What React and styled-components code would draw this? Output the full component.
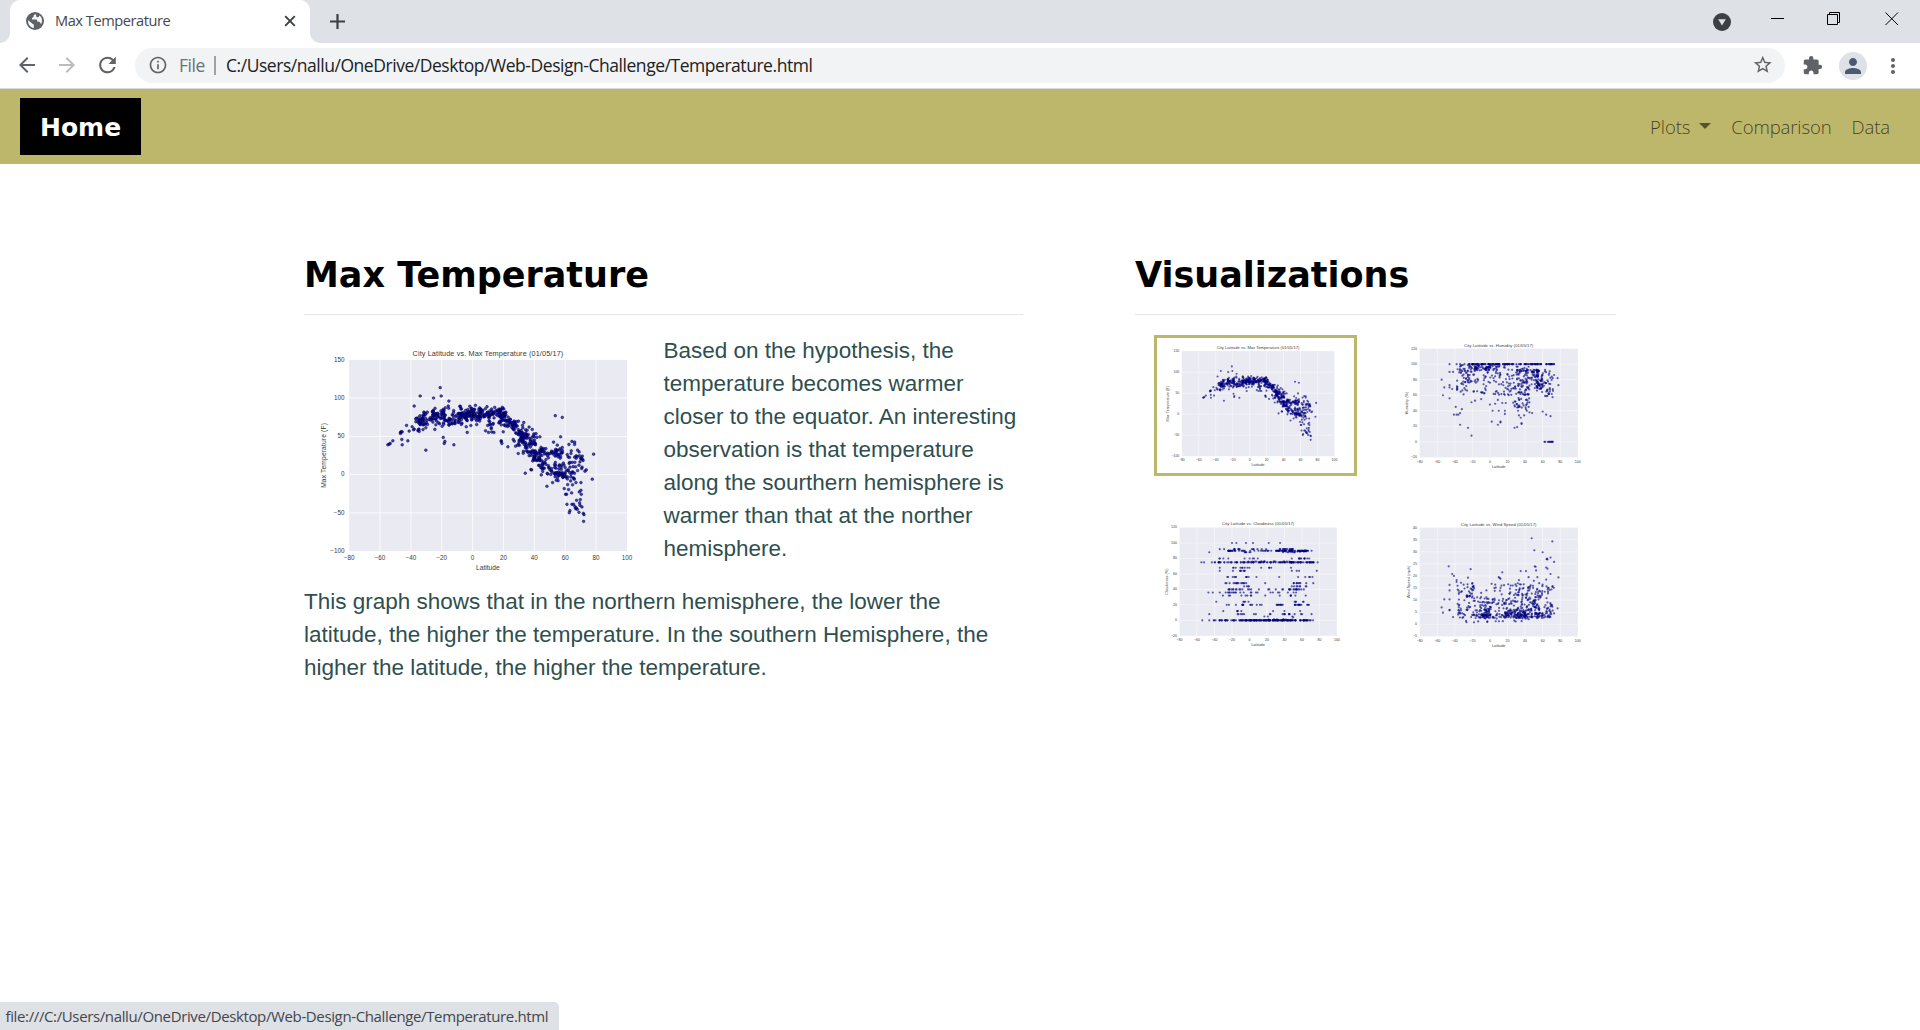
import React from "react";
import styled, { createGlobalStyle } from "styled-components";
import {
  MdArrowBack,
  MdArrowForward,
  MdRefresh,
  MdInfoOutline,
  MdStarBorder,
  MdExtension,
  MdPerson,
  MdMoreVert,
} from "react-icons/md";

const UI = `"Segoe UI", "Open Sans", "Noto Sans", sans-serif`;
const HEAD = `Verdana, "DejaVu Sans", sans-serif`;
const BODY = `Arial, "Liberation Sans", sans-serif`;

const Global = createGlobalStyle`
  *, *::before, *::after { box-sizing: border-box; }
  html, body { margin: 0; padding: 0; }
  body { background: #fff; overflow: hidden; }
  svg { display: block; }
`;

/* ---------- window frame ---------- */

const Window = styled.div`
  display: flex;
  flex-direction: column;
  width: 1920px;
  height: 1030px;
  position: relative;
  font-family: ${UI};
`;

const TabStrip = styled.div`
  display: flex;
  align-items: flex-end;
  height: 43px;
  background: #dee1e6;
`;

const TabFoot = styled.div`
  width: 10px;
  height: 10px;
  background: radial-gradient(
    circle at ${(p) => (p.$side === "left" ? "0 0" : "100% 0")},
    #dee1e6 9.5px,
    #fff 10.2px
  );
`;

const Tab = styled.div`
  display: flex;
  align-items: center;
  width: 300px;
  height: 43px;
  padding: 0 14px 2px 16px;
  border-radius: 10px 10px 0 0;
  background: #fff;
`;

const TabTitle = styled.span`
  flex: 1;
  margin-left: 11px;
  padding-bottom: 2px;
  font-size: 14.6px;
  line-height: 20px;
  letter-spacing: -0.45px;
  color: #45494d;
  white-space: nowrap;
`;

const NewTab = styled.div`
  display: flex;
  align-items: center;
  height: 43px;
  padding: 0 0 1px 10px;
`;

const Captions = styled.div`
  display: flex;
  align-items: flex-start;
  height: 43px;
  margin-left: auto;
  padding: 12px 21.5px 0 0;
`;

const TabSearch = styled.div`
  width: 18px;
  height: 18px;
  margin: 1px 40px 0 0;
`;

const CaptionGlyph = styled.div`
  width: 14px;
  height: 14px;
  margin-left: ${(p) => p.$gap || 0}px;
`;

const Toolbar = styled.div`
  display: flex;
  align-items: center;
  height: 46px;
  padding: 0 15px 0 14px;
  border-bottom: 1px solid #dadce0;
  background: #fff;
  color: #5f6368;
`;

const ToolButton = styled.div`
  display: flex;
  align-items: center;
  justify-content: center;
  width: 25px;
  height: 29px;
  padding-bottom: 1px;
  margin: 0 ${(p) => p.$gap}px 0 ${(p) => p.$before || 0}px;
  color: ${(p) => (p.$muted ? "#babcbe" : "#5f6368")};
`;

const Omnibox = styled.div`
  display: flex;
  align-items: center;
  flex: 1;
  height: 35px;
  padding: 0 12px 1px 13px;
  border-radius: 18px;
  background: #f1f3f4;
`;

const Scheme = styled.span`
  width: 35px;
  margin-left: 11px;
  font-size: 17.5px;
  letter-spacing: -0.45px;
  line-height: 24px;
  color: #6d7175;
`;

const Divider = styled.span`
  width: 2px;
  height: 19px;
  margin-right: 10px;
  background: #9fa3a8;
`;

const Address = styled.span`
  flex: 1;
  font-size: 17.5px;
  line-height: 24px;
  letter-spacing: -0.458px;
  color: #202124;
  white-space: nowrap;
`;

const Avatar = styled.div`
  display: flex;
  align-items: center;
  justify-content: center;
  width: 28px;
  height: 28px;
  margin-right: 14px;
  border-radius: 50%;
  background: #dee1e6;
  color: #4a5a70;
`;

const StatusBubble = styled.div`
  position: absolute;
  left: 0;
  bottom: 0;
  height: 28px;
  width: 559px;
  padding: 3px 0 0 5.5px;
  border-radius: 0 5px 0 0;
  background: #dee1e6;
  font-size: 15px;
  line-height: 22px;
  letter-spacing: -0.37px;
  color: #43474b;
  white-space: nowrap;
`;

/* ---------- page ---------- */

const Navbar = styled.nav`
  display: flex;
  align-items: center;
  justify-content: space-between;
  height: 75px;
  padding: 0 30px 0 20px;
  background: #bdb76b;
`;

const Brand = styled.a`
  display: flex;
  align-items: center;
  height: 57px;
  padding: 2px 20px 0;
  background: #000;
  color: #fff;
  font: bold 25px/37px ${HEAD};
`;

const NavLinks = styled.div`
  display: flex;
  gap: 20px;
`;

const NavLink = styled.a`
  display: flex;
  align-items: center;
  font-size: 18.5px;
  font-weight: 300;
  line-height: 30px;
  letter-spacing: -0.1px;
  color: rgba(0, 0, 0, 0.68);
`;

const Caret = styled.span`
  margin: -1px 0 0 9px;
  border: 6px solid transparent;
  border-top-color: rgba(0, 0, 0, 0.55);
  border-bottom: 0;
`;

const Content = styled.main`
  display: flex;
  gap: 112px;
  padding: 88px 0 0 304px;
`;

const Column = styled.section`
  width: ${(p) => p.$w}px;
`;

const Heading = styled.h1`
  height: 62px;
  margin: 0 0 20px;
  border-bottom: 1px solid #e5e5e5;
  box-sizing: content-box;
  color: #000;
  font: bold 35px/46px ${HEAD};
`;

const Article = styled.div`
  margin-top: -1px;
`;

const Lead = styled.div`
  display: flex;
  align-items: flex-start;
  gap: 1px;
  height: 251px;
`;

const Text = styled.p`
  margin: 0;
  font: 22.5px/33px ${BODY};
  color: #2f4f4f;
  white-space: pre;
`;

const Gallery = styled.div`
  display: grid;
  grid-template-columns: 203px 204px;
  column-gap: 37px;
  row-gap: 38px;
  grid-auto-rows: 141px;
  margin-left: 19px;
`;

const Thumb = styled.div`
  height: 141px;
  border: ${(p) => (p.$active ? "3px solid #bdb76b" : "0")};
`;

/* ---------- plots ---------- */

// Plot drawings use a 1080 x 720 canvas with the axes at 136..972 by 72..648.
const AX = { x: 136, y: 72, w: 837, h: 576 };

function random(seed) {
  let s = seed;
  return () => {
    s = (s * 1664525 + 1013904223) % 4294967296;
    return s / 4294967296;
  };
}

const range = (a, b, step) => {
  const out = [];
  for (let v = a; v <= b; v += step) out.push(v);
  return out;
};

// [from, to, cities] per latitude band
const BANDS = [
  [-37, -27, 34],
  [-27, -18, 46],
  [-18, -11, 24],
  [-11, 1, 84],
  [1, 16, 44],
  [16, 30, 84],
  [30, 45, 112],
  [45, 60, 105],
  [60, 73, 54],
];

const along = (rnd, from, to, n) =>
  Array.from({ length: n }, () => from + (to - from) * rnd());

// [lat from, lat to, temp from, temp to, spread, count]
const TEMP_BANDS = [
  [-38, -31, 66, 72, 12, 26],
  [-34, -24, 70, 78, 13, 26],
  [-26, -18, 80, 80, 9, 28],
  [-26, -11, 71, 70, 13, 28],
  [-18, -9, 77, 78, 14, 16],
  [-10, 5, 80, 81, 11, 76],
  [-11, 5, 75, 74, 12, 22],
  [5, 21, 79, 80, 10, 64],
  [9, 15, 66, 64, 12, 8],
  [17, 29, 77, 63, 14, 60],
  [28, 35, 57, 44, 18, 40],
  [31, 42, 52, 34, 23, 62],
  [38, 45, 28, 20, 12, 28],
  [43, 59, 29, 29, 9, 46],
  [43, 60, 14, 0, 15, 40],
  [52, 66, 5, 2, 18, 40],
  [60, 72, 20, 16, 20, 22],
];

// single cities, measured on an 833 x 572 axes box whose corner is (148, 90)
const TEMP_CITIES = [
  [421, 173], [361, 198], [424, 198], [401, 204], [343, 228], [447, 213], [445, 228],
  [264, 344], [268, 342], [271, 340], [279, 332], [306, 328], [307, 344], [324, 332],
  [320, 286], [302, 307], [304, 305], [307, 305], [302, 310], [328, 303], [337, 290],
  [343, 297], [341, 299], [358, 304], [378, 293], [378, 360], [430, 322], [435, 334],
  [433, 340], [462, 344], [502, 307], [499, 290], [604, 334], [606, 340], [604, 332],
  [624, 350], [640, 328], [643, 333], [647, 348], [655, 370], [676, 429], [693, 418],
  [766, 257], [787, 262], [782, 320], [761, 336], [816, 334], [824, 336], [807, 343],
  [824, 343], [881, 372], [877, 447], [859, 419], [855, 423], [741, 468], [720, 320],
  [697, 298], [787, 352], [772, 345], [793, 475], [797, 492], [800, 492], [815, 488],
  [801, 522], [810, 541], [808, 547], [830, 510], [841, 508], [844, 492], [838, 485],
  [843, 457], [828, 457], [821, 522], [827, 535], [840, 525], [846, 530], [832, 537],
  [837, 546], [850, 549], [852, 553], [851, 573], [806, 478], [803, 463], [823, 447],
  [847, 378], [848, 388], [840, 395], [837, 405], [827, 410], [813, 370], [814, 362],
  [832, 379], [557, 302], [566, 307], [582, 307], [610, 305], [574, 296], [405, 298],
  [408, 284], [383, 283], [816, 522], [825, 529], [695, 419], [724, 434], [758, 457],
  [843, 480], [839, 518], [829, 533], [797, 440], [802, 446], [812, 452],
].map(([x, y]) => [((x - 148) / 833) * 180 - 80, 150 - ((y - 90) / 572) * 250]);

function temperature() {
  const rnd = random(7);
  const pts = [...TEMP_CITIES];
  TEMP_BANDS.forEach(([a, b, t0, t1, s, n]) => {
    for (let i = 0; i < n; i++) {
      const k = rnd();
      pts.push([a + (b - a) * k, t0 + (t1 - t0) * k + (rnd() + rnd() - 1) * s]);
    }
  });
  return pts;
}

function humidity() {
  const rnd = random(23);
  const pts = [
    [-55, 80], [-53.5, 60], [-52, 70], [-46, 100], [-46, 90], [-42, 90], [-46, 73], [-46, 70],
    [-43, 68], [-46, 56], [-38, 100], [-34, 100], [-29, 100], [-39, 45], [-41, 35], [-38, 35],
    [-36, 35], [-34, 37], [-34, 22], [-32, 42], [-25, 18], [-21, 8], [-21, 51], [-17, 53],
    [-10, 55], [0, 48], [2, 26], [3, 40], [9, 22], [12, 25], [12, 26], [10, 40], [17, 36],
    [17, 40], [28, 18], [31, 19], [36, 23], [36, 24], [35, 31], [33, 34], [39, 34], [41, 42],
    [45, 38], [48, 37], [60, 39], [64, 35], [69, 33], [78, 73], [77, 82], [73, 86], [9, 54],
    [6, 49], [14, 50], [18, 50], [28, 47], [32, 40], [42, 40], [44, 45], [-30, 61], [-26, 66],
  ];
  [62, 63, 66, 67, 68, 69, 69.6, 70.5, 71, 71.6].forEach((x) => pts.push([x, 0]));
  along(rnd, -25, -3, 30).forEach((x) => pts.push([x, 100]));
  along(rnd, -3, 18, 30).forEach((x) => pts.push([x, 100]));
  along(rnd, 18, 73, 62).forEach((x) => pts.push([x, 100]));
  const put = (a, b, lo, hi, n) =>
    along(rnd, a, b, n).forEach((x) => pts.push([x, lo + (hi - lo) * rnd()]));
  put(-38, -26, 64, 99, 40);
  put(-26, -12, 76, 99, 34);
  put(-18, 3, 92, 99, 48);
  put(-20, 2, 62, 92, 28);
  put(2, 20, 76, 99, 30);
  put(4, 22, 60, 80, 18);
  put(20, 44, 60, 97, 76);
  put(26, 45, 44, 64, 40);
  put(31, 56, 90, 93, 26);
  put(48, 56, 82, 93, 34);
  put(40, 60, 66, 84, 38);
  put(53, 60, 68, 78, 22);
  put(58, 72, 56, 94, 44);
  return pts;
}

function cloudiness() {
  const rnd = random(41);
  const pts = [
    [-55, 75], [-52, 75], [-46, 88], [-43, 75], [78, 75], [77, 64], [73, 48], [71, 90],
    [-54, 0], [-46, 0], [-47, 36], [-42, 36], [-38, 24], [-46, 8], [-34, 36], [-34, 68],
    [-34, 64], [-34, 92], [-34, 80], [-20, 100], [-15, 100], [-4, 100], [4, 100], [22, 100],
    [35, 100], [-29, 92], [18, 48], [8, 56], [34, 56], [17, 5], [21, 5], [49, 5], [50, 4],
    [58, 12], [40, 12], [27, 12], [-30, 12], [71, 8], [-19, 64],
  ];
  // [cover, lat from, lat to, cities]
  [
    [0, -41, -5, 34], [0, -5, 45, 110], [0, 45, 53, 14], [0, 57, 73, 22], [1, 20, 50, 10],
    [8, -15, 10, 7], [8, 5, 72, 12], [12, -15, -8, 4], [20, -28, 15, 14], [20, 30, 42, 9],
    [20, 50, 70, 13], [24, -10, 0, 4], [24, 50, 62, 5], [32, -32, 3, 8], [32, 10, 65, 7],
    [36, -28, 10, 15], [36, 20, 66, 7], [40, -28, 2, 14], [40, 8, 70, 20], [44, -9, 0, 4],
    [44, 48, 66, 8], [48, -28, 0, 14], [48, 50, 72, 8], [56, -26, 0, 10], [56, 55, 72, 5],
    [64, -12, -5, 6], [64, 45, 62, 3], [68, -20, 0, 9], [68, 10, 65, 5], [75, -41, -8, 22],
    [75, -8, 30, 30], [75, 30, 74, 52], [76, -5, 50, 16], [80, -35, 10, 8], [80, 45, 72, 11],
    [88, -6, 3, 6], [88, 38, 52, 6], [90, -25, -16, 16], [90, -14, 26, 18], [90, 30, 67, 66],
    [92, -24, 20, 12], [92, 28, 52, 14], [89, 38, 65, 14],
  ].forEach(([v, a, b, n]) => along(rnd, a, b, n).forEach((x) => pts.push([x, v])));
  return pts;
}

function wind() {
  const rnd = random(97);
  const pts = [
    [47.5, 35.6], [71, 34.3], [50.5, 30.6], [60, 29.8], [69, 27.6], [65, 27.2], [65.5, 26.8],
    [64.5, 26.9], [73, 25.8], [-47, 24], [-22, 22.8], [-43, 20.8], [-41, 20], [-25, 19.3],
    [-38, 18.3], [-38, 17.5], [-46, 16.3], [-46, 14], [-46, 10.3], [-52, 10.3], [-55, 7],
    [-53.5, 4.8], [-46, 6], [-46, 5.8], [-42, 3], [14, 21.5], [10, 19.5], [11, 19.2], [12, 18.8],
    [35, 22], [41, 22], [51, 24], [52, 23.8], [52.5, 22.3], [64, 23.5], [65.5, 23], [69, 20.8],
    [78, 19.4], [44, 19.5], [54, 19.5], [64, 18.5], [33, 18.3], [77, 6.6], [73, 4.5], [71, 15.5],
    [70, 14.4], [-33, 17.2], [-30, 16.4], [-20, 17], [-4, 14], [-10, 13], [6, 16.4], [5, 15],
    [-18, 15], [-20, 14], [13, 16], [16, 16.2], [12, 15], [50, 18], [56, 17], [29, 16.5],
  ];
  BANDS.forEach(([a, b, n]) => {
    along(rnd, a, b, Math.round(n * 0.85)).forEach((x) => {
      const r = rnd();
      const top = a === -11 || a === -18 ? 8 : 13.5;
      pts.push([x, 2.2 + top * Math.pow(r, a < -18 ? 1.2 : 2.1) + rnd() * 1.6]);
    });
  });
  along(rnd, 18, 46, 44).forEach((x) => pts.push([x, 2 + rnd() * 4]));
  along(rnd, -12, 0, 14).forEach((x) => pts.push([x, 2.5 + rnd() * 4]));
  along(rnd, 50, 56, 12).forEach((x) => pts.push([x, 4 + rnd() * 8]));
  along(rnd, -28, 72, 12).forEach((x) => pts.push([x, 0.6 + rnd()]));
  return pts;
}

const PLOTS = {
  temperature: {
    title: "City Latitude vs. Max Temperature (01/05/17)", titleWidth: 454,
    label: "Max Temperature (F)", labelWidth: 195,
    min: -100, max: 150, step: 50, labelX: 62, points: temperature(),
  },
  humidity: {
    title: "City Latitude vs. Humidity (01/05/17)", titleWidth: 366,
    label: "Humidity (%)", labelWidth: 120,
    min: -20, max: 120, step: 20, labelX: 72, points: humidity(),
  },
  cloudiness: {
    title: "City Latitude vs. Cloudiness (01/05/17)", titleWidth: 384,
    label: "Cloudiness (%)", labelWidth: 140,
    min: -20, max: 120, step: 20, labelX: 72, points: cloudiness(),
  },
  wind: {
    title: "City Latitude vs. Wind Speed (01/05/17)", titleWidth: 400,
    label: "Wind Speed (mph)", labelWidth: 172,
    min: -5, max: 40, step: 5, labelX: 80, points: wind(),
  },
};

const PlotSvg = styled.svg`
  flex: none;
  font-family: ${BODY};
  fill: #3a3a3a;
`;

const minus = (v) => String(v).replace("-", "\u2212");

function Plot({ kind, width, height, top = 0 }) {
  const p = PLOTS[kind];
  const small = width < 300;
  const px = (lat) => AX.x + ((lat + 80) / 180) * AX.w;
  const py = (v) => AX.y + ((p.max - v) / (p.max - p.min)) * AX.h;
  const lats = range(-80, 100, 20);
  const ticks = range(p.min, p.max, p.step);
  return (
    <PlotSvg
      width={width}
      height={height + top}
      viewBox={`0 ${(-top * 1080) / width} 1080 ${((height + top) * 1080) / width}`}
    >
      <rect x={AX.x} y={AX.y} width={AX.w} height={AX.h} fill="#eaeaf2" />
      <g stroke="#fff" strokeWidth={small ? 3.2 : 3} strokeOpacity="0.75">
        {lats.slice(1, -1).map((v) => (
          <line key={v} x1={px(v)} x2={px(v)} y1={AX.y} y2={AX.y + AX.h} />
        ))}
        {ticks.slice(1, -1).map((v) => (
          <line key={v} x1={AX.x} x2={AX.x + AX.w} y1={py(v)} y2={py(v)} />
        ))}
      </g>
      <g
        fill={small ? "#000080" : "#0000c0"}
        stroke="#000028"
        strokeWidth={small ? 0 : 2.2}
        fillOpacity={small ? 0.62 : 0.72}
        strokeOpacity="0.6"
      >
        {p.points.map(([a, b], i) => (
          <circle key={i} cx={px(a)} cy={py(b)} r={small ? 5.8 : 4.1} />
        ))}
      </g>
      <text x={554} y={61} fontSize="22" textAnchor="middle" textLength={p.titleWidth}>
        {p.title}
      </text>
      <g fontSize="19" textAnchor="middle">
        {lats.map((v) => (
          <text key={v} x={px(v)} y={676}>{minus(v)}</text>
        ))}
      </g>
      <g fontSize="19" textAnchor="end">
        {ticks.map((v) => (
          <text key={v} x={122} y={py(v) + 5}>{minus(v)}</text>
        ))}
      </g>
      <text x={554} y={704} fontSize="20" textAnchor="middle">Latitude</text>
      <text
        transform={`translate(${p.labelX + 3} 360) rotate(-90)`}
        fontSize="20"
        textAnchor="middle"
        textLength={p.labelWidth}
      >
        {p.label}
      </text>
    </PlotSvg>
  );
}

/* ---------- small glyphs ---------- */

const Globe = () => (
  <svg width="18" height="18" viewBox="0 0 18 18">
    <circle cx="9" cy="9" r="9" fill="#5f6368" />
    <path
      d="M9.6 2.1 C8.2 3 7.4 3.4 7.6 4.6 C7.7 5.6 6 5.5 6 6.6 L6 7.6 L10.2 7.6 C11.2 7.6 11.2 8.8 11.2 9.6 L13 9.8 C14.2 10 14.6 11.4 15 12.3 C17 8.5 16 5 13.4 3.4 C13.2 5 11.6 5.4 10.4 5.2 C10.6 4 9.8 3.4 9.6 2.1 Z M2.1 8.2 L5.6 11 C6.6 11.6 6.8 12.4 7.8 12.4 L7.8 16 C4 15.4 1.7 12 2.1 8.2 Z"
      fill="#fff"
      fillOpacity="0.95"
    />
  </svg>
);

const CloseTab = () => (
  <svg width="12" height="12" viewBox="0 0 12 12" stroke="#3c4043" strokeWidth="1.9">
    <path d="M1.2 1.2 L10.8 10.8 M10.8 1.2 L1.2 10.8" />
  </svg>
);

const Plus = () => (
  <svg width="15" height="15" viewBox="0 0 15 15" stroke="#3c4043" strokeWidth="2.2">
    <path d="M7.5 0 V15 M0 7.5 H15" />
  </svg>
);

const TabSearchGlyph = () => (
  <svg width="18" height="18" viewBox="0 0 18 18">
    <circle cx="9" cy="9" r="9" fill="#3c4043" />
    <path d="M5.2 6.3 H12.8 L9 12.6 Z" fill="#dee1e6" />
  </svg>
);

export default function App() {
  return (
    <Window>
      <Global />
      <TabStrip>
        <TabFoot $side="left" />
        <Tab>
          <Globe />
          <TabTitle>Max Temperature</TabTitle>
          <CloseTab />
        </Tab>
        <TabFoot $side="right" />
        <NewTab><Plus /></NewTab>
        <Captions>
          <TabSearch><TabSearchGlyph /></TabSearch>
          <CaptionGlyph>
            <svg width="14" height="14" stroke="#000"><path d="M0 6.5 H13" /></svg>
          </CaptionGlyph>
          <CaptionGlyph $gap={42}>
            <svg width="14" height="14" stroke="#000" fill="none">
              <path d="M0.5 2.5 H10.5 V12.5 H0.5 Z M2.5 2.5 V0.5 H12.5 V10.5 H10.5" />
            </svg>
          </CaptionGlyph>
          <CaptionGlyph $gap={44}>
            <svg width="14" height="14" stroke="#000"><path d="M0.5 0.5 L13 13 M13 0.5 L0.5 13" /></svg>
          </CaptionGlyph>
        </Captions>
      </TabStrip>
      <Toolbar>
        <ToolButton $gap={15}><MdArrowBack size={24} /></ToolButton>
        <ToolButton $gap={16} $muted><MdArrowForward size={24} /></ToolButton>
        <ToolButton $gap={15}><MdRefresh size={26} /></ToolButton>
        <Omnibox>
          <MdInfoOutline size={20} />
          <Scheme>File</Scheme>
          <Divider />
          <Address>C:/Users/nallu/OneDrive/Desktop/Web-Design-Challenge/Temperature.html</Address>
          <MdStarBorder size={21.5} />
        </Omnibox>
        <ToolButton $before={15} $gap={14}><MdExtension size={21} /></ToolButton>
        <Avatar><MdPerson size={24} /></Avatar>
        <MdMoreVert size={24} />
      </Toolbar>
      <Navbar>
        <Brand>Home</Brand>
        <NavLinks>
          <NavLink>Plots<Caret /></NavLink>
          <NavLink>Comparison</NavLink>
          <NavLink>Data</NavLink>
        </NavLinks>
      </Navbar>
      <Content>
        <Column $w={719}>
          <Heading>Max Temperature</Heading>
          <Article>
            <Lead>
              <Plot kind="temperature" width={358.5} height={239} top={2} />
              <Text>{`Based on the hypothesis, the
temperature becomes warmer
closer to the equator. An interesting
observation is that temperature
along the sourthern hemisphere is
warmer than that at the norther
hemisphere.`}</Text>
            </Lead>
            <Text>{`This graph shows that in the northern hemisphere, the lower the
latitude, the higher the temperature. In the southern Hemisphere, the
higher the latitude, the higher the temperature.`}</Text>
          </Article>
        </Column>
        <Column $w={481}>
          <Heading>Visualizations</Heading>
          <Gallery>
            <Thumb $active><Plot kind="temperature" width={197} height={131} /></Thumb>
            <Thumb><Plot kind="humidity" width={204} height={136} /></Thumb>
            <Thumb><Plot kind="cloudiness" width={203} height={136} /></Thumb>
            <Thumb><Plot kind="wind" width={204} height={136} /></Thumb>
          </Gallery>
        </Column>
      </Content>
      <StatusBubble>file:///C:/Users/nallu/OneDrive/Desktop/Web-Design-Challenge/Temperature.html</StatusBubble>
    </Window>
  );
}
